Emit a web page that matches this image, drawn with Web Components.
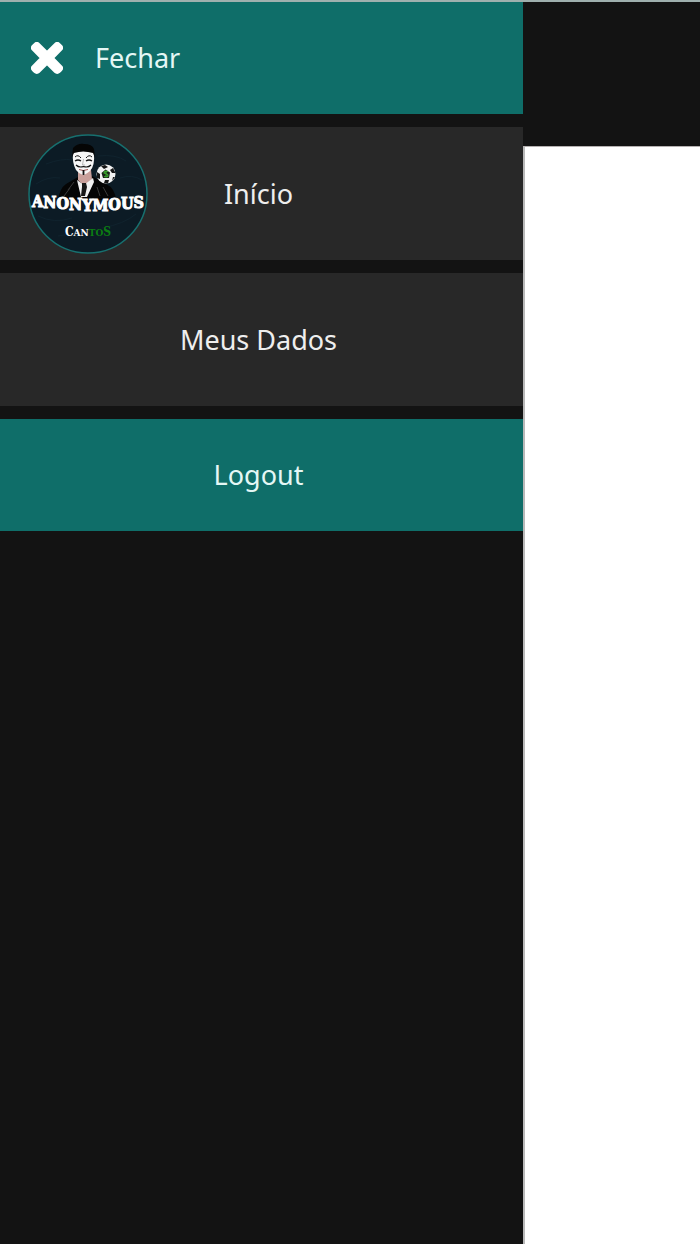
<!DOCTYPE html>
<html lang="pt-BR">
<head>
<meta charset="utf-8">
<meta name="viewport" content="width=device-width, initial-scale=1">
<title>Anonymous Cantos</title>
<style>
    body {
        margin: 0;
        background-color: #ffffff;
        font-family: "Noto Sans", "Open Sans", sans-serif;
        font-size: 27px;
        line-height: 36px;
        color: #eeeeee;
    }
</style>
</head>
<body>
<app-shell>
    <side-menu slot="menu">
        <menu-close>Fechar</menu-close>
        <menu-item href="#inicio"><brand-logo slot="icon"></brand-logo>Início</menu-item>
        <menu-item href="#meus-dados">Meus Dados</menu-item>
        <menu-item href="#logout" variant="accent">Logout</menu-item>
    </side-menu>
</app-shell>

<script>
class AppShell extends HTMLElement {

    constructor() {
        super();
        this.attachShadow({ mode: 'open' });
        this.shadowRoot.innerHTML = `
        <style>
            :host {
                display: grid;
                grid-template-columns: calc(75% - 2px) 1fr;
                min-height: 100vh;
                box-sizing: border-box;
                border-top: 2px solid #9fb0ae;
            }

            .page {
                display: flex;
                flex-direction: column;
            }

            header {
                height: 144px;
                background-color: #131313;
                border-bottom: 1px solid #b5b1b1;
            }

            main {
                flex: 1;
                border-left: 2px solid #b9b9b9;
                background-color: #ffffff;
            }
        </style>
        <slot name="menu"></slot>
        <div class="page">
            <header></header>
            <main></main>
        </div>`;
    }
}

class SideMenu extends HTMLElement {

    constructor() {
        super();
        this.attachShadow({ mode: 'open' });
        this.shadowRoot.innerHTML = `
        <style>
            :host {
                display: block;
                background-color: #131313;
            }

            nav {
                display: flex;
                flex-direction: column;
                gap: 13px;
            }
        </style>
        <nav><slot></slot></nav>`;
    }
}

class MenuClose extends HTMLElement {

    constructor() {
        super();
        this.attachShadow({ mode: 'open' });
        this.shadowRoot.innerHTML = `
        <style>
            :host {
                display: block;
            }

            button {
                display: flex;
                align-items: center;
                gap: 32px;
                width: 100%;
                height: 112px;
                padding: 0 31px;
                border: 0;
                background-color: #0f6e69;
                color: #e4f7f5;
                font: inherit;
                text-align: left;
                cursor: pointer;
            }

            svg {
                width: 32px;
                height: 32px;
                fill: #ffffff;
                stroke: #ffffff;
                stroke-width: 32px;
            }
        </style>
        <button type="button">
            <svg viewBox="-16 64 384 384" aria-hidden="true"><path d="M242.72 256l100.07-100.07c12.28-12.28 12.28-32.19 0-44.48l-22.24-22.24c-12.28-12.28-32.19-12.28-44.48 0L176 189.28 75.93 89.21c-12.28-12.28-32.19-12.28-44.48 0L9.21 111.45c-12.28 12.28-12.28 32.19 0 44.48L109.28 256 9.21 356.07c-12.28 12.28-12.28 32.19 0 44.48l22.24 22.24c12.28 12.28 32.2 12.28 44.48 0L176 322.72l100.07 100.07c12.28 12.28 32.2 12.28 44.48 0l22.24-22.24c12.28-12.28 12.28-32.19 0-44.48L242.72 256z"/></svg>
            <span><slot></slot></span>
        </button>`;
    }
}

class MenuItem extends HTMLElement {

    constructor() {
        super();
        this.attachShadow({ mode: 'open' });
    }

    connectedCallback() {
        this.shadowRoot.innerHTML = `
        <style>
            :host {
                display: block;
            }

            a {
                display: grid;
                grid-template-columns: 1fr auto 1fr;
                align-items: center;
                height: 133px;
                padding: 0 34px 0 28px;
                background-color: #282828;
                color: inherit;
                text-decoration: none;
            }

            :host([variant="accent"]) a {
                height: 112px;
                background-color: #0f6e69;
                color: #e4f7f5;
            }

            .label {
                grid-column: 2;
            }
        </style>
        <a href="${this.getAttribute('href') || '#'}">
            <slot name="icon"></slot>
            <span class="label"><slot></slot></span>
        </a>`;
    }
}

class BrandLogo extends HTMLElement {

    constructor() {
        super();
        this.attachShadow({ mode: 'open' });
        this.shadowRoot.innerHTML = `
        <style>
            :host {
                display: block;
                width: 120px;
                height: 120px;
            }

            svg {
                display: block;
                width: 100%;
                height: 100%;
            }

            text {
                font-family: "DejaVu Serif Condensed", "DejaVu Serif", serif;
                font-weight: bold;
            }
        </style>
        <svg viewBox="0 0 120 120" role="img" aria-label="Anonymous Cantos">
            <circle cx="60" cy="60" r="59" fill="#0c1b25" stroke="#17706f" stroke-width="1.5"/>
            <g fill="none" stroke="#10232e" stroke-width="1">
                <path d="M18 30 Q34 24 44 26M70 22 Q88 20 98 27M8 50 Q20 42 32 44M92 44 Q104 40 114 46M10 82 Q26 90 44 84M74 94 Q96 90 108 80M30 102 Q46 98 54 106"/>
            </g>
            <!-- suit -->
            <path d="M30 66 Q32 54 38 50 L50 43 L55 48 L64 42 L78 50 Q87 54 88 66 Z" fill="#050505"/>
            <path d="M40 56 L46 48M36 62 L42 54M72 62 L69 53M80 62 L75 53" stroke="#3a3a3a" stroke-width="1"/>
            <path d="M50 38 L63 36 L64 45 L57 53 L50 46 Z" fill="#c9a09b"/>
            <path d="M49 46 L56 51 L65 44 L66 48 L59 63 L53 63 Z" fill="#f1f1f1"/>
            <path d="M54 49 L58 49 L59 53 L57 62 L53 62 L54 53 Z" fill="#171717"/>
            <!-- mask -->
            <path d="M45 19 Q45 17 55 17 Q66 17 66 19 Q67 32 62 37 Q57 41 55 41 Q51 40 48 36 Q44 29 45 19 Z" fill="#f7f7f7"/>
            <path d="M44 23 L45 14 Q50 9 56 10 Q64 10 66 15 L67 24 L65 19 Q55 16 46 19 Z" fill="#050505"/>
            <path d="M47 23 Q50 20 53 24M58 24 Q61 20 64 23" fill="none" stroke="#151515" stroke-width="1"/>
            <path d="M47 27 Q50 25 53 27M58 27 Q61 25 64 27" fill="none" stroke="#151515" stroke-width="1.4"/>
            <path d="M55.5 25 L54.5 31 L57 31" fill="none" stroke="#aaaaaa" stroke-width=".8"/>
            <path d="M48 31 Q51 34 55.5 32.5 Q60 34 63 31" fill="none" stroke="#111111" stroke-width="1.2"/>
            <path d="M51 35.5 Q55 37.5 60 35.5" fill="none" stroke="#8a2b2b" stroke-width=".8"/>
            <path d="M55.5 36 V41" stroke="#111111" stroke-width="1.8"/>
            <!-- ball -->
            <circle cx="78" cy="40" r="9.5" fill="#f2f2f2"/>
            <path d="M73 32 L77 31 L80 33 L76 35 ZM85 34 L87.5 39 L84 39 L82 36 ZM69 38 L72 40 L72 45 L69 44 ZM77 46 L81 46 L80 49.5 L76 49 ZM85 43 L87 43 L84 47 Z" fill="#151515"/>
            <path d="M77.5 35.5 L82 38.5 L81 44 L75 44 L73.5 39 Z" fill="#172116"/>
            <path d="M80 37.5 Q76 36.5 76 39 Q80 40 80 41.5 Q80 43.5 76 42.5M78 36.5V43.5" fill="none" stroke="#39a52b" stroke-width="1.2"/>
            <!-- lettering -->
            <text x="60" y="73" dy="0 1 1 1 1 0 -1 -1 -1" text-anchor="middle" font-size="16" fill="#ffffff" stroke="#ffffff" stroke-width="1">ANONYMOUS</text>
            <text x="60" y="102" text-anchor="middle" fill="#ffffff" font-size="10"><tspan font-size="12">C</tspan>AN<tspan fill="#0b7d12">TO</tspan><tspan fill="#0b7d12" font-size="12">S</tspan></text>
        </svg>`;
    }
}

customElements.define('app-shell', AppShell);
customElements.define('side-menu', SideMenu);
customElements.define('menu-close', MenuClose);
customElements.define('menu-item', MenuItem);
customElements.define('brand-logo', BrandLogo);
</script>
</body>
</html>
